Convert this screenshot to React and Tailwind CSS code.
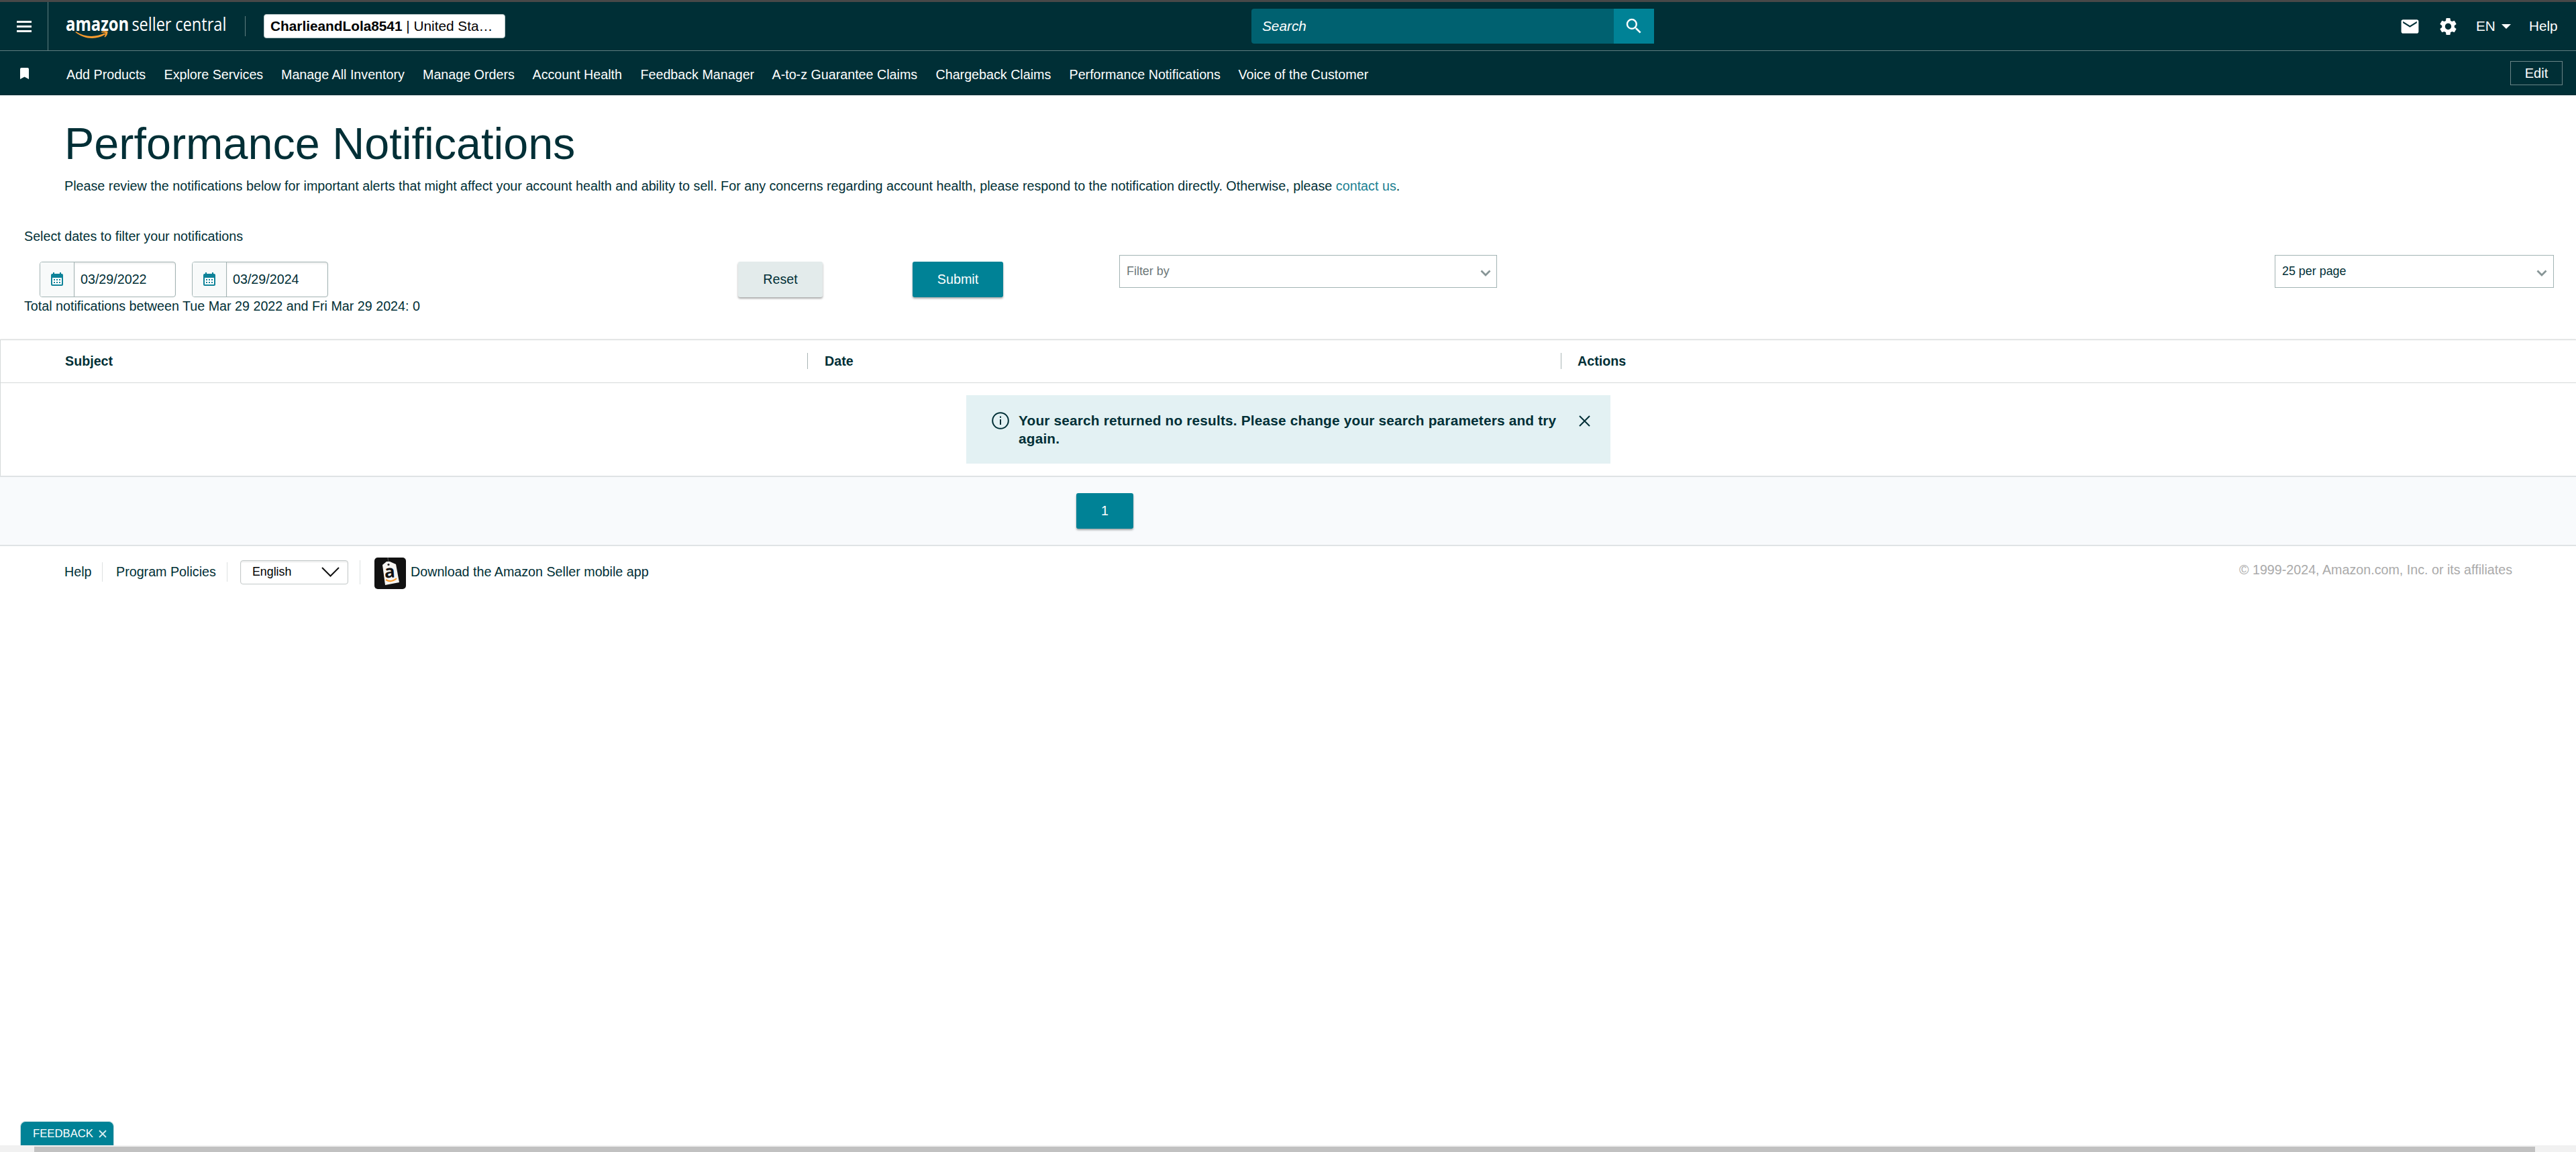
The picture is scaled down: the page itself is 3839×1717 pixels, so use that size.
import React from "react";
import { MdSettings, MdMail, MdSearch } from "react-icons/md";

const navLinks = [
    { label: "Add Products", width: "w-[145.5px]" },
    { label: "Explore Services", width: "w-[174.5px]" },
    { label: "Manage All Inventory", width: "w-[211px]" },
    { label: "Manage Orders", width: "w-[163.5px]" },
    { label: "Account Health", width: "w-[161px]" },
    { label: "Feedback Manager", width: "w-[196px]" },
    { label: "A-to-z Guarantee Claims", width: "w-[244px]" },
    { label: "Chargeback Claims", width: "w-[199px]" },
    { label: "Performance Notifications", width: "w-[252px]" },
    { label: "Voice of the Customer", width: "w-[200px]" },
];

const SellerCentralLogo = () => (
    <svg className="ml-[26px] shrink-0" width="243" height="44" viewBox="0 0 243 44" fill="#fff" fontFamily="'Open Sans', 'Noto Sans', sans-serif" fontSize="28">
        <g transform="scale(0.82 1)">
            <text x="0" y="28.5" fontWeight="700" textLength="115" lengthAdjust="spacingAndGlyphs">amazon</text>
            <text x="120" y="28.5" textLength="72" lengthAdjust="spacingAndGlyphs">seller</text>
            <text x="199" y="28.5" textLength="93" lengthAdjust="spacingAndGlyphs">central</text>
        </g>
        <path d="M15 30c13 8.500 29 9 43 2.300l1 2C46 42.500 28 42 14.500 31.200z" fill="#f79a2e" />
        <path d="M53 30.500c3-1.800 8.500-1.600 9.500-.5 0 3-1 6.500-4 8.500l-1-.6c1.200-2.400 1.800-5 1.200-6-1.200-.6-3.400-.6-5.700-.4z" fill="#f79a2e" />
    </svg>
);

const TopBar = () => (
    <header className="flex h-[73px] items-center border-b border-[#5f7d7f] bg-[#002f36] text-[20.8px] text-white">
        <div className="flex h-full w-[72px] shrink-0 items-center justify-center border-r border-[#5f7d7f]">
            <div className="flex w-[22px] flex-col gap-[4px]">
                <span className="h-[3px] bg-white" />
                <span className="h-[3px] bg-white" />
                <span className="h-[3px] bg-white" />
            </div>
        </div>
        <SellerCentralLogo />
        <div className="ml-6 h-[30px] w-px shrink-0 bg-[#5f7d7f]" />
        <div className="ml-[27px] flex h-9 w-[360px] shrink-0 items-center rounded-[4px] border border-[#b5c4c5] bg-white pl-[9px] leading-none whitespace-pre text-black">
            <b>CharlieandLola8541</b> | United Sta…
        </div>
        <div className="ml-[1112px] flex h-[52px] w-[600px] shrink-0">
            <div className="flex w-[540px] shrink-0 items-center rounded-l-sm bg-[#006170] pl-4 italic">Search</div>
            <div className="flex w-[60px] shrink-0 items-center justify-center bg-[#008296]">
                <MdSearch className="size-[30px]" />
            </div>
        </div>
        <MdMail className="ml-[1111px] size-[31px] shrink-0" />
        <MdSettings className="ml-[26px] size-[31px] shrink-0" />
        <span className="ml-[26px]">EN</span>
        <svg className="ml-[9px] shrink-0" width="14" height="7" viewBox="0 0 14 7"><path d="M0 0h14L7 7z" fill="#fff" /></svg>
        <span className="ml-[27px]">Help</span>
    </header>
);

const NavBar = () => (
    <nav className="flex h-[66px] items-center bg-[#002f36] text-[19.700px] text-white">
        <svg className="ml-[30px] shrink-0" width="13" height="17" viewBox="0 0 13 17"><path d="M0 2q0-2 2-2h9q2 0 2 2v15l-6.500-3.500L0 17z" fill="#fff" /></svg>
        <div className="mt-[6px] ml-[56px] flex">
            {navLinks.map((link) => (
                <span key={link.label} className={`${link.width} shrink-0 whitespace-nowrap`}>{link.label}</span>
            ))}
        </div>
        <div className="mr-5 ml-auto flex h-9 w-[78px] items-center justify-center border border-[#6b8587] text-[20px]">Edit</div>
    </nav>
);

const DateInput = ({ value }) => (
    <div className="flex h-[53px] w-[203px] rounded-[4px] border border-[#a2b3b3] text-[19.700px]">
        <div className="flex w-[51px] items-center justify-center rounded-l-[3px] border-r border-[#a2b3b3] bg-[#f8fafa]">
            <svg className="-mt-0.5" width="18" height="20" viewBox="0 0 18 20">
                <path d="M2 2h1V0h2v2h8V0h2v2h1q2 0 2 2v14q0 2-2 2H2q-2 0-2-2V4q0-2 2-2z" fill="#0f8399" />
                <path d="M2 8h14v10H2z" fill="#fff" />
                <path d="M4 10h2v2H4zm4 0h2v2H8zm4 0h2v2h-2zM4 14h2v2H4zm4 0h2v2H8zm4 0h2v2h-2z" fill="#0f8399" />
            </svg>
        </div>
        <div className="flex grow items-center rounded-r-[3px] pl-[9px] shadow-[inset_0_2px_3px_rgba(0,0,0,0.08)]">{value}</div>
    </div>
);

const Select = ({ label, className }) => (
    <div className={`flex h-[49px] items-center justify-between border border-[#a2b3b3] pl-2.5 text-[17.900px] ${className}`}>
        <span className="-mt-px">{label}</span>
        <svg className="mt-[5px]" width="16" height="11" viewBox="0 0 16 11"><path d="M1.500 1.500L8 8l6.500-6.500" fill="none" stroke="#879596" strokeWidth="2.800" /></svg>
    </div>
);

const Filters = () => (
    <section className="flex h-[53px] pl-[59px]">
        <DateInput value="03/29/2022" />
        <div className="w-6" />
        <DateInput value="03/29/2024" />
        <button className="ml-[611px] h-[53px] w-[126px] rounded-[3px] bg-[#e3ebeb] text-[19.700px] shadow-[0_2px_3px_rgba(0,0,0,0.35)]">Reset</button>
        <button className="ml-[134px] h-[53px] w-[135px] rounded-[3px] bg-[#008296] text-[19.700px] text-white shadow-[0_2px_3px_rgba(0,0,0,0.35)]">Submit</button>
        <Select label="Filter by" className="-mt-2.5 ml-[173px] w-[563px] pr-2 text-[#6c7778]" />
        <Select label="25 per page" className="-mt-2.5 mr-[33px] ml-auto w-[416px] pr-[9px]" />
    </section>
);

const NotificationsTable = () => (
    <section className="mt-[37px] border-t border-l border-[#d5d9d9] shadow-[0_0_3px_rgba(0,0,0,0.12)]">
        <div className="flex h-[64px] items-center border-b border-[#d5d9d9] text-[19.700px] font-bold">
            <span className="w-[1202px] pl-[96px]">Subject</span>
            <span className="-mt-0.5 h-6 w-px bg-[#a9b5b5]" />
            <span className="w-[1122px] pl-[25px]">Date</span>
            <span className="-mt-0.5 h-6 w-px bg-[#a9b5b5]" />
            <span className="pl-[24px]">Actions</span>
        </div>
        <div className="flex h-[138px] pt-[18px]">
            <div className="ml-[1439px] flex h-[102px] w-[960px] bg-[#e3f1f3] pt-6 pl-[38px]">
                <svg className="mt-px shrink-0" width="26" height="26" viewBox="0 0 26 26" fill="none" stroke="#002f36">
                    <circle cx="13" cy="13" r="11.800" strokeWidth="2" />
                    <path d="M13 11v8M13 6.500v2.200" strokeWidth="2" />
                </svg>
                <p className="w-[825px] shrink-0 pl-[14px] text-[20.800px] leading-[27px] font-bold tracking-[0.190px] whitespace-nowrap">
                    Your search returned no results. Please change your search parameters and try
                    <br />
                    again.
                </p>
                <svg className="mt-1.5 ml-6 shrink-0" width="17" height="17" viewBox="0 0 17 17"><path d="M1 1l15 15M16 1L1 16" stroke="#002f36" strokeWidth="2" /></svg>
            </div>
        </div>
    </section>
);

const Pagination = () => (
    <div className="flex h-[105px] border-y-2 border-[#dfe3e5] bg-[#f8fafc] pt-6 pl-[1604px]">
        <button className="h-[53px] w-[85px] rounded-[3px] bg-[#008296] text-[19.700px] text-white shadow-[0_2px_3px_rgba(0,0,0,0.35)]">1</button>
    </div>
);

const AppIcon = () => (
    <svg className="mt-1 ml-[21px] shrink-0" width="47" height="47" viewBox="0 0 47 47">
        <rect width="47" height="47" rx="5" fill="#111" />
        <path d="M20 0l1 7" stroke="#444" strokeWidth="1.500" />
        <path d="M12 11l6-5h5l9 4 5 27-21 4z" fill="#f6f5f2" />
        <circle cx="21" cy="10.500" r="1.600" fill="#222" />
        <text x="15" y="30" fontSize="26" fontWeight="700" fontFamily="'Open Sans', sans-serif" fill="#111" transform="rotate(-4 22 24)">a</text>
        <path d="M17 33q8 5 16-2" fill="none" stroke="#f79a2e" strokeWidth="2.200" />
    </svg>
);

const Footer = () => (
    <footer className="flex h-[77px] items-center pl-[96px] text-[19.700px] whitespace-nowrap">
        <span className="w-[56px]">Help</span>
        <span className="h-[29px] w-px bg-[#dde1e1]" />
        <span className="w-[185px] pl-5">Program Policies</span>
        <span className="h-[29px] w-px bg-[#dde1e1]" />
        <div className="ml-[19px] flex h-9 w-[161px] items-center justify-between rounded-[4px] border border-[#c3c8c8] pr-3 pl-[17px] text-[17.800px] text-black shadow-[inset_0_2px_2px_rgba(0,0,0,0.08)]">
            English
            <svg width="27" height="15" viewBox="0 0 27 15"><path d="M1 1l12.500 12.500L26 1" fill="none" stroke="#111" strokeWidth="2" /></svg>
        </div>
        <span className="ml-[17px] h-9 w-px bg-[#dde1e1]" />
        <AppIcon />
        <span className="ml-[7px]">Download the Amazon Seller mobile app</span>
        <span className="mr-[95px] ml-auto -mt-1.5 text-[#aaa]">© 1999-2024, Amazon.com, Inc. or its affiliates</span>
    </footer>
);

export default function App() {
    return (
        <div className="flex h-screen flex-col overflow-hidden bg-white font-['Liberation_Sans',Arial,sans-serif] text-[#002f36]">
            <div className="h-[3px] bg-[#484848]" />
            <TopBar />
            <NavBar />
            <main>
                <h1 className="mt-[30px] mb-px ml-[96px] text-[66.500px] leading-[84px]">Performance Notifications</h1>
                <p className="mt-2 ml-[96px] text-[19.745px] leading-[26px]">
                    Please review the notifications below for important alerts that might affect your account health and ability to sell. For any concerns regarding account health, please respond to the notification directly. Otherwise, please <span className="text-[#1b7f92]">contact us</span>.
                </p>
                <p className="mt-[49px] mb-[25px] ml-9 text-[19.700px] leading-[26px]">Select dates to filter your notifications</p>
                <Filters />
                <p className="ml-9 text-[19.700px] leading-[26px]">Total notifications between Tue Mar 29 2022 and Fri Mar 29 2024: 0</p>
                <NotificationsTable />
                <Pagination />
            </main>
            <Footer />
            <div className="mt-auto ml-[30px] flex h-9 w-[140px] items-center rounded-t-lg border border-b-0 border-[#c8dfe2] bg-[#008296] pl-[18px] text-[16.700px] text-white">
                FEEDBACK
                <svg className="ml-2" width="12" height="12" viewBox="0 0 12 12"><path d="M1 1l10 10M11 1L1 11" stroke="#d8eef1" strokeWidth="1.800" /></svg>
            </div>
            <div className="h-2.5 bg-[#f1f1f1] pt-0.5">
                <div className="ml-[51px] h-2 w-[3727px] bg-[#c1c1c1]" />
            </div>
        </div>
    );
}
